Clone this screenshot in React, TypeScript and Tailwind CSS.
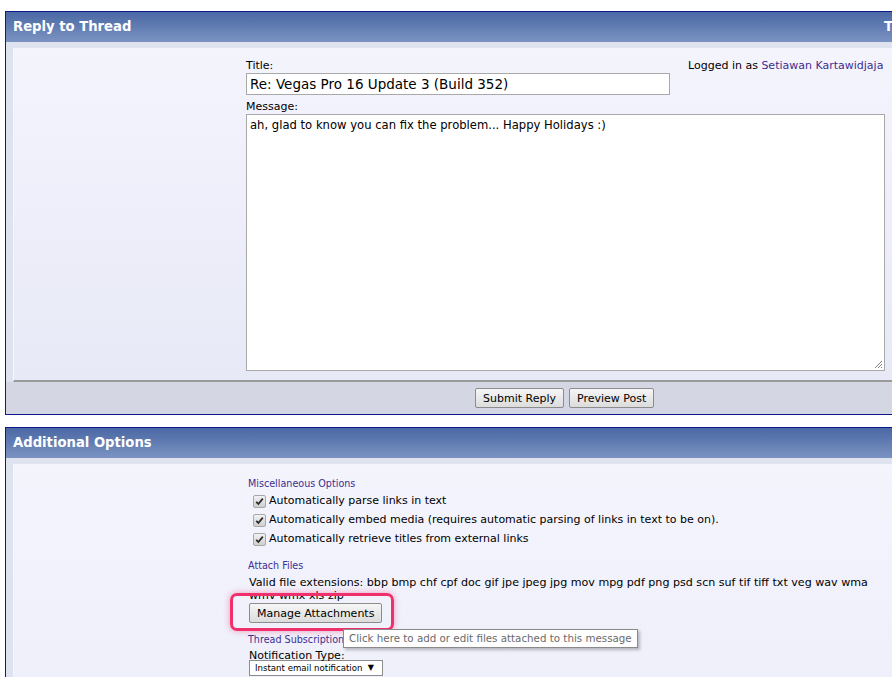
import React from 'react';

const font = { fontFamily: '"DejaVu Sans", Verdana, sans-serif' };

function Check({ label }: { label: string }) {
  return (
    <div className="flex items-center h-[19px] pl-[5px]">
      <span className="flex items-center justify-center w-[13px] h-[13px] rounded-[2px] border border-[#a8a8a8] bg-gradient-to-b from-[#f2f2f2] to-[#cfcfcf]">
        <svg width="9" height="9" viewBox="0 0 9 9">
          <path d="M1.2 4.8 L3.4 7 L7.8 1.6" fill="none" stroke="#2b2b2b" strokeWidth="1.8" />
        </svg>
      </span>
      <span className="ml-[3px] text-[11px] text-black">{label}</span>
    </div>
  );
}

function Btn({ children }: { children: React.ReactNode }) {
  return (
    <button className="h-[20px] px-[7px] text-[11px] leading-none text-black border border-[#8c8c8c] rounded-[2px] bg-gradient-to-b from-[#f6f6f6] to-[#dcdcdc]">
      {children}
    </button>
  );
}

export default function App() {
  return (
    <div className="relative w-[892px] h-[677px] overflow-hidden bg-white" style={font}>
      <div className="pt-[11px] pl-[5px]">
        {/* Reply to Thread */}
        <div className="w-[960px] border-l border-t border-b border-[#0c1a8c]">
          <div className="flex items-center h-[30px] px-[7px] bg-gradient-to-b from-[#4a68a4] to-[#7b93c2] text-white text-[13.2px] font-bold whitespace-nowrap">
            <span className="w-[871px] shrink-0">Reply to Thread</span>
            <span className="shrink-0">Thread Tools</span>
          </div>
          <div className="bg-[#dfe3ef] pt-[6px] pl-[7px]">
            <div className="flex h-[334px] pt-[11px] bg-gradient-to-b from-[#f4f4fd] to-[#e7e9f6] border-b-2 border-[#9a9a9a] border-l border-l-[#f7f7fb]">
              <div className="w-[232px]" />
              <div className="w-[639px]">
                <div className="flex">
                  <div className="w-[442px]">
                    <div className="text-[11px] leading-[14px] text-black">Title:</div>
                    <div className="w-[424px] h-[22px] border border-[#a9a9a9] bg-white px-[3px] text-[13.5px] leading-[20px] text-black whitespace-nowrap">
                      Re: Vegas Pro 16 Update 3 (Build 352)
                    </div>
                  </div>
                  <div className="text-[11px] leading-[14px] text-black whitespace-nowrap">
                    Logged in as <span className="text-[#3d2d91]">Setiawan Kartawidjaja</span>
                  </div>
                </div>
                <div className="mt-[5px] text-[11px] leading-[14px] text-black">Message:</div>
                <div className="relative w-[639px] h-[257px] border border-[#a9a9a9] bg-white px-[3px] pt-[3px] text-[11.6px] leading-[15px] text-black">
                  ah, glad to know you can fix the problem... Happy Holidays :)
                  <svg className="absolute right-[1px] bottom-[1px]" width="10" height="10" viewBox="0 0 10 10">
                    <path d="M9 2 L2 9 M9 5 L5 9 M9 8 L8 9" stroke="#808080" strokeWidth="1" />
                  </svg>
                </div>
              </div>
            </div>
          </div>
          <div className="flex items-center h-[32px] pl-[469px] gap-[5px] bg-[#d4d7e3]">
            <Btn>Submit Reply</Btn>
            <Btn>Preview Post</Btn>
          </div>
        </div>

        {/* Additional Options */}
        <div className="mt-[12px] w-[960px] border-l border-t border-[#0c1a8c]">
          <div className="flex items-center h-[30px] px-[7px] bg-gradient-to-b from-[#4a68a4] to-[#7b93c2] text-white text-[13.2px] font-bold">
            Additional Options
          </div>
          <div className="bg-[#dfe3ef] pt-[6px] pl-[7px] h-[300px]">
            <div className="flex h-full pt-[14px] bg-gradient-to-b from-[#f4f4fd] to-[#eceef9] border-l border-l-[#f7f7fb]">
              <div className="w-[234px]" />
              <div className="w-[640px]">
                <div className="text-[9.6px] leading-[12px] text-[#3d2d91]">Miscellaneous Options</div>
                <div className="mt-[2px]">
                  <Check label="Automatically parse links in text" />
                  <Check label="Automatically embed media (requires automatic parsing of links in text to be on)." />
                  <Check label="Automatically retrieve titles from external links" />
                </div>
                <div className="mt-[11px] text-[9.6px] leading-[12px] text-[#3d2d91]">Attach Files</div>
                <div className="mt-[4px] w-[630px] pl-[1px] text-[11.1px] leading-[13px] text-black">
                  Valid file extensions: bbp bmp chf cpf doc gif jpe jpeg jpg mov mpg pdf png psd scn suf tif tiff txt veg wav wma wmv wmx xls zip
                </div>
                <div className="relative flex w-fit mt-[1px] ml-[1px]">
                  <div className="absolute -left-[19px] -right-[12px] -top-[10px] -bottom-[8px] rounded-[7px] border-[3px] border-[#f0306c] shadow-[0_0_6px_rgba(240,48,108,0.45)]" />
                  <Btn>Manage Attachments</Btn>
                </div>
                <div className="mt-[11px] text-[9.6px] leading-[12px] text-[#3d2d91]">Thread Subscription</div>
                <div className="mt-[3px] pl-[1px] text-[11px] leading-[13px] text-black">Notification Type:</div>
                <div className="mt-[-2px] ml-[1px] flex items-center justify-between w-[134px] h-[16px] border border-[#8c8c8c] bg-white pl-[5px] pr-[8px] text-[8.6px] text-black">
                  <span>Instant email notification</span>
                  <span className="text-[8px]">▼</span>
                </div>
              </div>
            </div>
          </div>
        </div>
      </div>

      {/* tooltip */}
      <div className="absolute left-[343px] top-[629px] h-[19px] px-[5px] flex items-center bg-white border border-[#8a8a8a] text-[10.3px] text-[#6a6a6a] shadow-[2px_2px_3px_rgba(0,0,0,0.25)]">
        Click here to add or edit files attached to this message
      </div>
    </div>
  );
}
